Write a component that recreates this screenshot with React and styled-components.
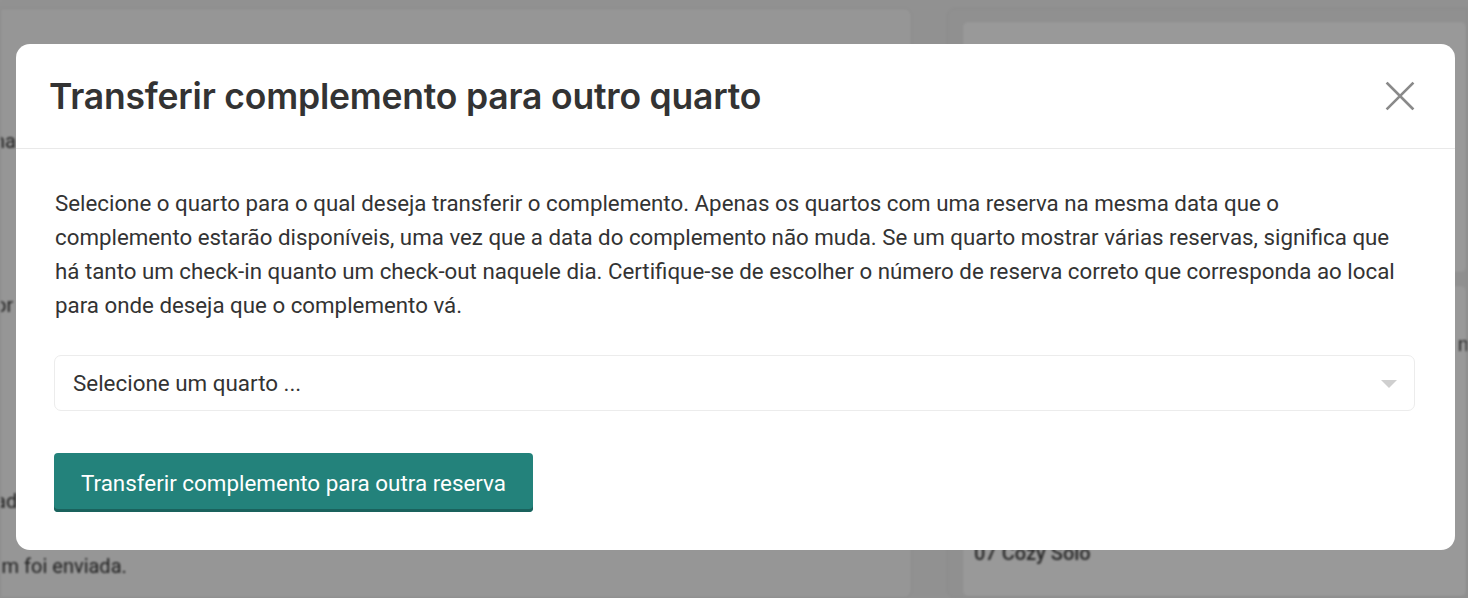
import React from 'react';
import styled, { createGlobalStyle } from 'styled-components';

const GlobalStyle = createGlobalStyle`
  html, body {
    margin: 0;
    padding: 0;
    height: 100%;
    overflow: hidden;
  }
  body {
    font-family: Roboto, 'Liberation Sans', sans-serif;
    background: #f4f4f4;
  }
`;

const Page = styled.div`
  position: relative;
  width: 1468px;
  height: 598px;
  overflow: hidden;
`;

const Backdrop = styled.div`
  display: flex;
  gap: 35px;
  padding-top: 8px;
  height: 100%;
  box-sizing: border-box;
  filter: blur(1.2px);
  background: #f2f2f2;
`;

const BgColumn = styled.div`
  flex: ${p => p.flex};
  background: ${p => p.bg};
  border: 1px solid #e6e6e6;
  border-radius: ${p => p.radius};
  padding: ${p => p.pad};
  display: flex;
  flex-direction: column;
  gap: ${p => p.gap};
  font-size: 20px;
  line-height: 24px;
  color: #333;
  overflow: hidden;
`;

const BgLine = styled.span`
  margin-top: ${p => p.top}px;
  margin-left: ${p => p.indent}px;
  white-space: nowrap;
`;

const BgCard = styled.div`
  background: #fff;
  border-radius: 6px;
  border: 1px solid #ececec;
  height: ${p => p.h};
  display: flex;
  flex-direction: column;
  justify-content: space-between;
  padding: ${p => p.pad};
  font-weight: 500;
  color: #444;
`;

const BgCardNote = styled.span`
  align-self: flex-end;
  margin-right: -14px;
  font-weight: 400;
`;

const Overlay = styled.div`
  position: absolute;
  inset: 0;
  background: rgba(0, 0, 0, 0.4);
  display: flex;
  align-items: flex-start;
  padding: 44px 0 0 16px;
`;

const Modal = styled.div`
  width: 1439px;
  background: #fff;
  border-radius: 14px;
  overflow: hidden;
`;

const Header = styled.div`
  display: flex;
  align-items: center;
  justify-content: space-between;
  height: 104px;
  padding: 0 40px 0 33px;
  border-bottom: 1px solid #e9e9e9;
`;

const Title = styled.h2`
  margin: 0;
  font-family: Inter, 'Noto Sans', sans-serif;
  font-weight: 600;
  font-size: 35.5px;
  color: #333;
  letter-spacing: -0.2px;
`;

const CloseButton = styled.button`
  background: none;
  border: none;
  padding: 0;
  width: 30px;
  height: 30px;
  display: flex;
  align-items: center;
  justify-content: center;
  cursor: pointer;
`;

const Body = styled.div`
  padding: 37px 40px 38px 38px;
  display: flex;
  flex-direction: column;
`;

const Text = styled.p`
  margin: 0 0 33px 1px;
  font-size: 22.3px;
  line-height: 34px;
  color: #333;
`;

const SelectBox = styled.div`
  display: flex;
  align-items: center;
  justify-content: space-between;
  height: 54px;
  border: 1px solid #ececec;
  border-radius: 7px;
  padding: 0 17px 0 18px;
  font-size: 22.4px;
  color: #333;
`;

const Caret = styled.span`
  width: 0;
  height: 0;
  border-left: 8px solid transparent;
  border-right: 8px solid transparent;
  border-top: 8px solid #cfcfcf;
  margin-top: 2px;
`;

const Actions = styled.div`
  margin-top: 42px;
  display: flex;
`;

const PrimaryButton = styled.button`
  background: #23827b;
  color: #fff;
  border: none;
  border-radius: 4px;
  height: 59px;
  padding: 0 27px;
  font-family: Roboto, 'Liberation Sans', sans-serif;
  font-size: 22.4px;
  box-shadow: inset 0 -3px 0 #1a625d;
  cursor: pointer;
`;

export default function App() {
  return (
    <Page>
      <GlobalStyle />
      <Backdrop>
        <BgColumn flex="0 0 910px" bg="#fbfbfb" radius="0 8px 8px 0" pad="0" gap="0">
          <BgLine top={120} indent={-7}>na</BgLine>
          <BgLine top={140} indent={-6}>or</BgLine>
          <BgLine top={172} indent={-6}>ad</BgLine>
          <BgLine top={41} indent={-10}>em foi enviada.</BgLine>
        </BgColumn>
        <BgColumn flex="1" bg="#f0f0f0" radius="8px 0 0 8px" pad="12px 0 0 14px" gap="12px">
          <BgCard h="290px" pad="0" />
          <BgCard h="270px" pad="46px 0 31px 11px">
            <BgCardNote>ng</BgCardNote>
            <span>07 Cozy Solo</span>
          </BgCard>
        </BgColumn>
      </Backdrop>
      <Overlay>
        <Modal>
          <Header>
            <Title>Transferir complemento para outro quarto</Title>
            <CloseButton aria-label="Fechar">
              <svg width="30" height="30" viewBox="0 0 30 30" fill="none" stroke="#8a8a8a" strokeWidth="2.6" strokeLinecap="square">
                <path d="M2.5 2.5 L27.5 27.5 M27.5 2.5 L2.5 27.5" />
              </svg>
            </CloseButton>
          </Header>
          <Body>
            <Text>
              Selecione o quarto para o qual deseja transferir o complemento. Apenas os quartos com uma reserva na mesma data que o<br />
              complemento estarão disponíveis, uma vez que a data do complemento não muda. Se um quarto mostrar várias reservas, significa que<br />
              há tanto um check-in quanto um check-out naquele dia. Certifique-se de escolher o número de reserva correto que corresponda ao local<br />
              para onde deseja que o complemento vá.
            </Text>
            <SelectBox>
              <span>Selecione um quarto ...</span>
              <Caret />
            </SelectBox>
            <Actions>
              <PrimaryButton>Transferir complemento para outra reserva</PrimaryButton>
            </Actions>
          </Body>
        </Modal>
      </Overlay>
    </Page>
  );
}
